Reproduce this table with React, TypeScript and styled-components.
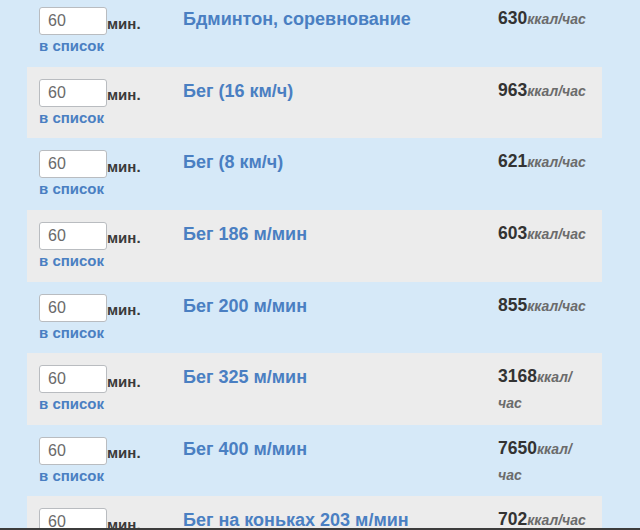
import React from "react";
import styled, { createGlobalStyle } from "styled-components";

const Global = createGlobalStyle`
  html, body { margin: 0; padding: 0; }
  body {
    background: #d6e9f8;
    font-family: "Liberation Sans", Arial, sans-serif;
    overflow: hidden;
  }
`;

const List = styled.div`
  margin: -5px 0 0 27px;
  width: 575px;
  display: flex;
  flex-direction: column;
`;

const Row = styled.div<{ $alt: boolean }>`
  height: 71.65px;
  box-sizing: border-box;
  padding: 12px 0 0 12px;
  display: grid;
  grid-template-columns: 144px 315px 94px;
  align-items: start;
  background: ${(p) => (p.$alt ? "#ececec" : "transparent")};
`;

const Amount = styled.div`
  display: flex;
  flex-direction: column;
`;

const InputLine = styled.div`
  display: flex;
  align-items: center;
`;

const Minutes = styled.input`
  width: 68px;
  height: 28px;
  box-sizing: border-box;
  border: 1px solid #b9bcc0;
  border-radius: 3px;
  background: #fff;
  padding: 0 0 0 8px;
  font-family: "Liberation Sans", Arial, sans-serif;
  font-size: 16px;
  color: #6a6a6a;
  outline: none;
`;

const Unit = styled.span`
  font-weight: bold;
  font-size: 15px;
  color: #3a3a3a;
  margin-top: 4px;
`;

const AddLink = styled.a`
  margin-top: 2px;
  font-weight: bold;
  font-size: 15px;
  line-height: 18px;
  color: #4a7fc2;
  text-decoration: none;
  cursor: pointer;
`;

const Title = styled.a`
  font-weight: bold;
  font-size: 18px;
  color: #4a7fc2;
  text-decoration: none;
  line-height: 22px;
  margin-top: 1px;
`;

const Calories = styled.div`
  line-height: 25px;
  margin-top: -1px;
  color: #333;
`;

const Num = styled.span`
  font-weight: bold;
  font-size: 17.5px;
`;

const Per = styled.span`
  font-weight: bold;
  font-style: italic;
  font-size: 14px;
  color: #6b6b6b;
`;

const BottomEdge = styled.div`
  position: fixed;
  left: 0;
  right: 0;
  bottom: 0;
  height: 2px;
  background: #3c3c3c;
`;

const items: [string, string][] = [
  ["Бдминтон, соревнование", "630"],
  ["Бег (16 км/ч)", "963"],
  ["Бег (8 км/ч)", "621"],
  ["Бег 186 м/мин", "603"],
  ["Бег 200 м/мин", "855"],
  ["Бег 325 м/мин", "3168"],
  ["Бег 400 м/мин", "7650"],
  ["Бег на коньках 203 м/мин", "702"],
];

export default function App() {
  return (
    <>
      <Global />
      <List>
        {items.map(([name, kcal], i) => (
          <Row key={i} $alt={i % 2 === 1}>
            <Amount>
              <InputLine>
                <Minutes defaultValue="60" />
                <Unit>мин.</Unit>
              </InputLine>
              <AddLink>в список</AddLink>
            </Amount>
            <Title>{name}</Title>
            <Calories>
              <Num>{kcal}</Num>
              <Per>ккал/час</Per>
            </Calories>
          </Row>
        ))}
      </List>
      <BottomEdge />
    </>
  );
}
